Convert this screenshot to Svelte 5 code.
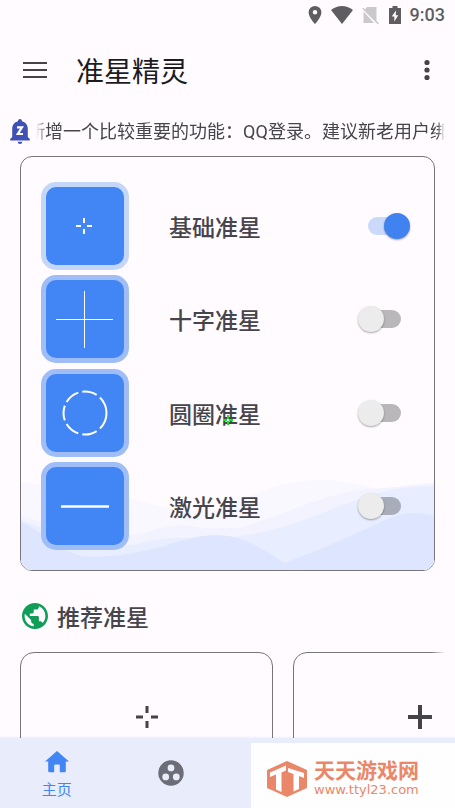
<script>
  let items = [
    { id: 'basic', name: '基础准星', on: true },
    { id: 'cross', name: '十字准星', on: false },
    { id: 'circle', name: '圆圈准星', on: false },
    { id: 'laser', name: '激光准星', on: false }
  ];
</script>

<div class="page">
  <div class="status">
    <svg width="14" height="20" viewBox="0 0 14 20"><path fill="#5f5d61" fill-rule="evenodd" d="M7 1a6.4 6.4 0 0 0-6.4 6.4C.6 12 7 19 7 19s6.400-7 6.400-11.600A6.400 6.400 0 0 0 7 1zm0 4a2.300 2.300 0 1 1 0 4.600A2.300 2.300 0 0 1 7 5z" /></svg>
    <svg width="22" height="20" viewBox="0 0 22 20"><path fill="#5f5d61" d="M0 5Q11-3 22 5L11 19z" /></svg>
    <svg width="18" height="20" viewBox="0 0 18 20">
      <path fill="#cbc8cc" d="M5 2h9.500v14.500L2.800 4.600zM1.500 6.500 12 18H1.500z" />
      <path stroke="#cbc8cc" stroke-width="1.500" d="M.8 3.300 16.500 19" />
    </svg>
    <svg width="12" height="20" viewBox="0 0 12 20"><path fill="#5f5d61" fill-rule="evenodd" d="M3.500 1h5v2H12v16H0V3h3.500zM7 5.500l-4.300 6h2.600v5l4-6.200H6.800z" /></svg>
    <span class="clock">9:03</span>
  </div>

  <header class="bar">
    <button class="icon-btn" aria-label="菜单">
      <svg width="24" height="18" viewBox="0 0 24 18"><path stroke="#454347" stroke-width="2" d="M0 2h24M0 9h24M0 16h24" /></svg>
    </button>
    <h1>准星精灵</h1>
    <button class="icon-btn" aria-label="更多">
      <svg width="6" height="22" viewBox="0 0 6 22" fill="#454347"><circle cx="3" cy="3.500" r="2.600" /><circle cx="3" cy="11" r="2.600" /><circle cx="3" cy="18.500" r="2.600" /></svg>
    </button>
  </header>

  <div class="notice">
    <svg width="20" height="26" viewBox="0 0 20 26">
      <path fill="#3f51b5" d="M10 0c1.300 0 2 1 2 2.300 3.600 1 5.800 3.800 5.800 7.700v8l2 2v1.500H.2V20l2-2v-8c0-3.900 2.200-6.700 5.800-7.700C8 1 8.700 0 10 0zM7.700 22.700h4.600A2.300 2.300 0 0 1 10 25a2.300 2.300 0 0 1-2.300-2.300z" />
      <path fill="none" stroke="#fff" stroke-width="2.200" d="M7 8.300h5L7.800 15h5.200" />
    </svg>
    <div class="ticker"><span>新增一个比较重要的功能：QQ登录。建议新老用户绑定</span></div>
  </div>

  <main>
    <section class="card">
      <svg class="waves" viewBox="0 0 414 92" preserveAspectRatio="none">
        <path fill="#f9f7ff" d="M0 4C40 8 70 14 110 20C150 34 190 40 225 20C250 8 275 2 300 2C325 2 345 7 365 14L414 40V92H0z" />
        <path fill="#f2f3ff" d="M0 38C40 50 80 60 120 56C150 46 165 46 180 50L220 50C270 34 305 16 345 11C370 10 390 7 414 5V92H0z" />
        <path fill="#e8edff" d="M0 42C50 62 90 74 125 64C165 54 190 66 220 58C275 50 310 30 350 17C375 10 390 9 414 8V92H0z" />
        <path fill="#dee6ff" d="M0 44C20 52 30 68 60 78C95 80 110 76 145 68C180 55 205 54 225 63C240 69 252 77 264 85C300 72 330 58 365 42C385 33 400 34 414 38V92H0z" />
      </svg>
      <ul>
        {#each items as item}
        <li>
          <span class="tile" class:active={item.on}>
            <svg width="60" height="60" viewBox="0 0 60 60" fill="none" stroke="#fff">
              {#if item.id === 'basic'}
              <path stroke-width="2" d="M29 22v5M29 33v5M21 30h5M32 30h5" />
              {:else if item.id === 'cross'}
              <path stroke-width="1" d="M29.500 2v57M1 30.500h57" />
              {:else if item.id === 'circle'}
              <circle cx="30" cy="30" r="21.500" stroke-width="2" pathLength="360" stroke-dasharray="46 11 40.400 11 40.400 11 40.400 11 40.400 11 40.400 11 46 0" />
              {:else}
              <path stroke-width="2.600" d="M6 30.500h48" />
              {/if}
            </svg>
          </span>
          <label for={item.id}>{item.name}</label>
          <input type="checkbox" role="switch" id={item.id} bind:checked={item.on} />
        </li>
        {/each}
      </ul>
    </section>

    <h2>
      <svg width="26" height="26" viewBox="2 2 20 20"><path fill="#0f9d58" d="M12 2C6.480 2 2 6.480 2 12s4.480 10 10 10 10-4.480 10-10S17.520 2 12 2zm-1 17.930c-3.950-.49-7-3.850-7-7.930 0-.62.080-1.210.210-1.790L9 15v1c0 1.100.9 2 2 2v1.930zm6.900-2.540c-.26-.81-1-1.390-1.900-1.390h-1v-3c0-.55-.45-1-1-1H8v-2h2c.55 0 1-.45 1-1V7h2c1.100 0 2-.9 2-2v-.41c2.930 1.190 5 4.060 5 7.410 0 2.080-.8 3.970-2.100 5.390z" /></svg>
      推荐准星
    </h2>

    <div class="recommend">
      <div class="rec">
        <svg width="24" height="24" viewBox="0 0 24 24"><path stroke="#454347" stroke-width="3" d="M12 1v7M12 16v7M1 12h7M16 12h7" /></svg>
      </div>
      <div class="rec">
        <svg width="24" height="24" viewBox="0 0 24 24"><path stroke="#454347" stroke-width="4" d="M12 0v24M0 12h24" /></svg>
      </div>
    </div>
  </main>

  <nav>
    <button class="tab current">
      <svg width="24" height="22" viewBox="0 0 24 22"><path fill="#4285f4" d="M12 0 24 10.500h-3.200V20q0 1.300-1.300 1.300h-4.700v-6.800q0-1-1-1h-3.600q-1 0-1 1v6.800H4.500q-1.300 0-1.300-1.300v-9.500H0z" /></svg>
      主页
    </button>
    <button class="tab" aria-label="社区">
      <svg width="26" height="26" viewBox="0 0 26 26"><path fill="#6d6d78" fill-rule="evenodd" d="M13 .3a12.700 12.700 0 1 0 0 25.400A12.700 12.700 0 0 0 13 .3zM13 4.500a3.400 3.400 0 1 1 0 6.800 3.400 3.400 0 0 1 0-6.800zM7.700 13.500a3.400 3.400 0 1 1 0 6.800 3.400 3.400 0 0 1 0-6.800zM18.300 13.500a3.400 3.400 0 1 1 0 6.800 3.400 3.400 0 0 1 0-6.800z" /></svg>
    </button>
  </nav>

  <svg class="aim" width="10" height="10" viewBox="0 0 10 10"><path stroke="#12e02a" stroke-width="2" d="M5 0v4M5 6v4M0 5h4M6 5h4" /></svg>

  <div class="mark">
    <svg width="42" height="36" viewBox="0 0 42 36">
      <path fill="#ea8768" d="M21 0 41 9v18L21 36 1 27V9z" />
      <path fill="#fffeff" d="M4 11.500 20 4.500V9.500L15.500 11.500V31L10 28.500V13.500L4 16zM22 7 38 12V17L33 15V28L27.500 30.500V13L22 11z" />
    </svg>
    <div class="mark-text">
      <strong>天天游戏网</strong>
      <span>www.ttyl23.com</span>
    </div>
  </div>
</div>

<style>
  :global(body) {
    margin: 0;
    background: #fffbff;
  }

  .page {
    position: relative;
    display: flex;
    flex-direction: column;
    height: 100vh;
    overflow: hidden;
    background: #fffbff;
    color: #46454b;
    font-family: 'Noto Sans CJK SC', sans-serif;
  }

  svg {
    display: block;
    flex: none;
  }

  button {
    border: none;
    background: none;
    padding: 0;
    font-family: inherit;
    cursor: pointer;
  }

  .status {
    display: flex;
    justify-content: flex-end;
    align-items: center;
    gap: 9px;
    height: 30px;
    padding-right: 10px;
  }

  .clock {
    font-family: Roboto, sans-serif;
    font-size: 18px;
    font-weight: 500;
    line-height: 20px;
    color: #5f5d61;
  }

  .bar {
    display: flex;
    align-items: center;
    height: 80px;
    padding: 0 25px 0 23px;
  }

  h1 {
    flex: 1;
    margin: 0 0 0 29px;
    font-size: 28px;
    font-weight: 400;
    line-height: 40px;
    color: #1c1b1f;
  }

  .notice {
    display: flex;
    align-items: center;
    gap: 6px;
    height: 44px;
    padding: 0 10px;
  }

  .ticker {
    display: flex;
    justify-content: center;
    flex: 1;
    min-width: 0;
    padding-left: 12px;
    overflow: hidden;
    font-family: Roboto, 'Noto Sans CJK SC', sans-serif;
    font-size: 18px;
    line-height: 26px;
    white-space: nowrap;
    mask-image: linear-gradient(90deg, transparent, #000 12px, #000 calc(100% - 8px), transparent);
  }

  main {
    flex: 1;
    min-height: 0;
    overflow: hidden;
  }

  .card {
    position: relative;
    box-sizing: border-box;
    margin: 2px 20px 0;
    aspect-ratio: 1;
    padding: 25px 24px 20px 20px;
    border: 1px solid #77757a;
    border-radius: 12px;
    overflow: hidden;
  }

  .waves {
    position: absolute;
    left: 0;
    bottom: 0;
    width: 100%;
    height: 92px;
  }

  ul {
    position: relative;
    display: flex;
    flex-direction: column;
    justify-content: space-between;
    height: 100%;
    margin: 0;
    padding: 0;
    list-style: none;
  }

  li {
    display: flex;
    align-items: center;
  }

  .tile {
    display: flex;
    align-items: center;
    justify-content: center;
    width: 78px;
    height: 78px;
    border: 5px solid #9fbef8;
    border-radius: 15px;
    background: #4285f4;
  }

  .tile.active {
    border-color: #c5d7f9;
  }

  label {
    flex: 1;
    margin-left: 40px;
    font-size: 23px;
    font-weight: 500;
    line-height: 30px;
  }

  input {
    appearance: none;
    position: relative;
    width: 52px;
    height: 26px;
    margin: 0;
    cursor: pointer;
  }

  input::before {
    content: '';
    position: absolute;
    top: 4px;
    left: 10px;
    right: 9px;
    height: 18px;
    border-radius: 9px;
    background: rgba(0, 0, 0, 0.27);
  }

  input::after {
    content: '';
    position: absolute;
    top: 0;
    left: 0;
    width: 26px;
    height: 26px;
    border-radius: 50%;
    background: #ececec;
    box-shadow: 0 1px 2px rgba(0, 0, 0, 0.35);
    transition: left 0.2s ease;
  }

  input:checked::before {
    background: #cbdafb;
  }

  input:checked::after {
    left: 26px;
    background: #4083f0;
  }

  h2 {
    display: flex;
    align-items: center;
    gap: 9px;
    margin: 30px 0 21px 22px;
    font-size: 23px;
    font-weight: 500;
    line-height: 30px;
  }

  .recommend {
    display: flex;
    gap: 20px;
    margin-right: 10px;
    padding-left: 20px;
    overflow: hidden;
    mask-image: linear-gradient(90deg, #000 calc(100% - 14px), transparent);
  }

  .rec {
    display: flex;
    flex: none;
    align-items: center;
    justify-content: center;
    box-sizing: border-box;
    width: 253px;
    height: 130px;
    border: 1px solid #77757a;
    border-radius: 14px;
  }

  nav {
    display: grid;
    grid-template-columns: repeat(4, 1fr);
    height: 70px;
    background: #e8ecfb;
    box-shadow: 0 -1px 2px #eeeffa;
  }

  .tab {
    display: flex;
    flex-direction: column;
    align-items: center;
    justify-content: center;
    gap: 4px;
    font-size: 15px;
    line-height: 24px;
  }

  .current {
    padding-top: 6px;
    color: #4285f4;
  }

  .aim {
    position: absolute;
    top: calc(50% + 11px);
    left: calc(50% - 5px);
  }

  .mark {
    position: absolute;
    right: 0;
    bottom: 0;
    display: flex;
    align-items: center;
    gap: 6px;
    box-sizing: border-box;
    width: 204px;
    height: 65px;
    padding: 6px 0 0 15px;
    background: #fffeff;
    color: #ea8768;
  }

  .mark-text {
    display: flex;
    flex-direction: column;
  }

  strong {
    font-family: Roboto, 'Noto Sans CJK SC', sans-serif;
    font-size: 21px;
    font-weight: 700;
    line-height: 22px;
  }

  .mark-text span {
    font-family: 'DejaVu Sans', sans-serif;
    font-size: 13px;
    line-height: 16px;
  }
</style>
